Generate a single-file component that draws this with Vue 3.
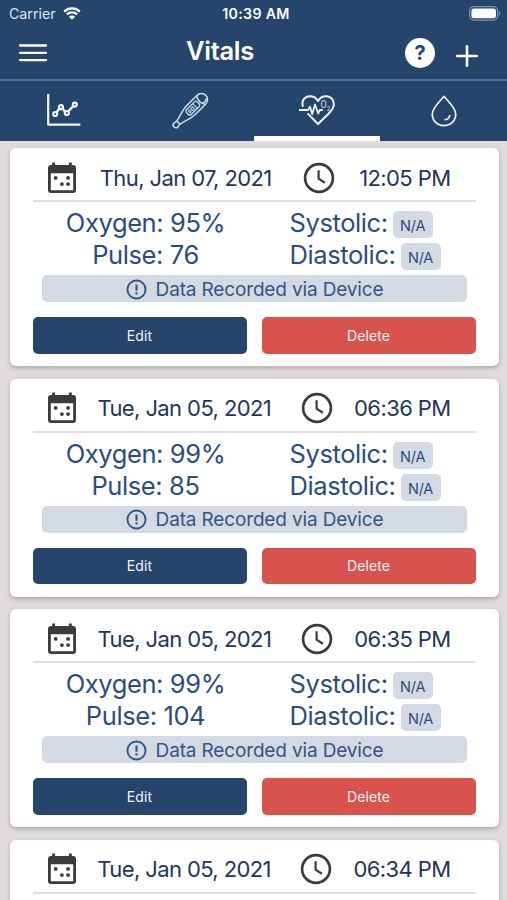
<template>
  <div class="screen">
    <header class="header">
      <div class="status">
        <div class="carrier">
          <span>Carrier</span>
          <svg class="wifi" viewBox="0 0 18 13">
            <path d="M1.2 4.6a11.2 11.2 0 0 1 15.6 0M3.9 7.4a7.4 7.4 0 0 1 10.2 0" />
            <path class="solid" d="M9 12.8L5.9 9.7a4.4 4.4 0 0 1 6.2 0z" />
          </svg>
        </div>
        <span class="time">10:39 AM</span>
        <svg class="battery" viewBox="0 0 32 15">
          <rect x=".7" y=".7" width="28" height="13.4" rx="4" />
          <rect class="level" x="2.4" y="2.5" width="24.6" height="9.8" rx="2.4" />
          <path class="level tip" d="M30 5.2c1.6.6 1.6 3.8 0 4.4z" />
        </svg>
      </div>
      <div class="toolbar">
        <button class="icon-btn" aria-label="Menu">
          <svg width="28" height="18" viewBox="0 0 28 18">
            <path d="M1 1.5h26M1 8.8h26M1 16.1h26" stroke="#fff" stroke-width="2.3" stroke-linecap="round" />
          </svg>
        </button>
        <h1 class="title">Vitals</h1>
        <div class="actions">
          <button class="help">?</button>
          <button class="icon-btn" aria-label="Add">
            <svg width="22" height="22" viewBox="0 0 22 22">
              <path d="M11 1.2v19.6M1.2 11h19.6" stroke="#fff" stroke-width="2.6" stroke-linecap="round" />
            </svg>
          </button>
        </div>
      </div>
      <nav class="tabs">
        <button v-for="tab in tabs" :key="tab" class="tab" :class="{ active: tab === activeTab }" :aria-label="tab"
          @click="activeTab = tab">
          <svg v-if="tab === 'chart'" width="34" height="34" viewBox="0 0 34 34">
            <path d="M2.2 1v30.6H34.4" stroke-width="2.2" />
            <path d="M10.6 19.2l3-4M16.4 15.4l2.8 3.4M22 18.6l5.4-5.6" stroke-width="2.4" />
            <circle cx="9.2" cy="21" r="2" stroke-width="2.2" />
            <circle cx="15" cy="14.2" r="2" stroke-width="2.2" />
            <circle cx="20.8" cy="20" r="2" stroke-width="2.2" />
            <circle cx="28.8" cy="11.6" r="2" stroke-width="2.2" />
          </svg>
          <svg v-else-if="tab === 'temperature'" class="thermo" width="38" height="38" viewBox="0 0 38 38">
            <g transform="translate(19 19) rotate(45)" stroke-width="1.5">
              <path d="M-6.2-15.5C-6.2-24.6 6.2-24.6 6.2-15.5V-2C6.2 5 3.4 10 2.2 16.500h-4.400C-3.400 10-6.200 5-6.200-2z" />
              <path d="M-6-15.500C-3-12.800 3-12.800 6-15.500M2.500-20.500c1.400 1.500 1.600 3.600 1 5.800" />
              <path d="M-2.200 16.500l-.6 3.500c0 3.400 5.600 3.400 5.600 0l-.6-3.500" />
              <rect x="-3.300" y="-11.600" width="6.600" height="15.200" rx="2" stroke-width="1.300" />
              <path d="M-3.200-7h6.400M-1.200-4.600h2.600v2.600h-2.600zM-1.200-.2h2.600v1.400h-2.600z" stroke-width="1" />
            </g>
          </svg>
          <svg v-else-if="tab === 'heart'" class="heart" width="38" height="34" viewBox="0 0 38 34">
            <path d="M5 12.800C3 6.600 6.800 2.200 12 2.200c3.600 0 6.200 1.700 8 4.800 1.800-3.100 4.400-4.800 8-4.800 5.200 0 8.300 4.200 7.800 8.800-.4 3.600-2.700 6.200-5.300 8.800L20 30 9.600 19.400" stroke-width="2" />
            <path d="M1 16h9l2-3.200 2.200 7.300 2.800-9.600 3.200 9 1.700-3.500h2.800" stroke-width="1.800" />
            <text class="o2" x="22.400" y="14">0<tspan class="sub" dy="2.600">2</tspan></text>
          </svg>
          <svg v-else class="drop" width="28" height="34" viewBox="0 0 28 34">
            <path d="M14 2.300C10 7.500 2.300 13.500 2.300 20.300c0 6.500 5 11.300 11.700 11.300s11.700-4.800 11.700-11.300C25.700 13.500 18 7.500 14 2.300z" stroke-width="1.700" />
            <path d="M14.500 25.700c3 0 4.900-1.800 5.300-4.700" stroke-width="1.800" />
          </svg>
        </button>
      </nav>
    </header>

    <main class="list">
      <article v-for="item in vitals" :key="item.time" class="card">
        <div class="when">
          <svg class="calendar" width="28" height="32" viewBox="0 0 28 32">
            <path d="M3 3h1.200V.6h2.900V3h13.800V.6h2.900V3H25a3 3 0 0 1 3 3v22a3 3 0 0 1-3 3H3a3 3 0 0 1-3-3V6a3 3 0 0 1 3-3zm-.2 8.200v17h22.400v-17z" fill-rule="evenodd" />
            <circle cx="7.700" cy="15.900" r="1.900" />
            <circle cx="20.100" cy="15.900" r="1.900" />
            <circle cx="13.900" cy="22.100" r="1.900" />
            <circle cx="20.100" cy="22.100" r="1.900" />
          </svg>
          <span class="date">{{ item.date }}</span>
          <svg class="clock" width="32" height="32" viewBox="0 0 32 32">
            <circle cx="16" cy="16" r="13.900" stroke-width="2.700" />
            <path d="M15.600 8.300v8.400l6.300 4" stroke-width="2.200" />
          </svg>
          <span class="hour">{{ item.time }}</span>
        </div>
        <template v-if="item.oxygen">
          <div class="values">
            <div class="col center">
              <div>Oxygen: {{ item.oxygen }}%</div>
              <div>Pulse: {{ item.pulse }}</div>
            </div>
            <div class="col">
              <div class="pressure">Systolic: <span class="badge">N/A</span></div>
              <div class="pressure">Diastolic: <span class="badge">N/A</span></div>
            </div>
          </div>
          <div class="source">
            <svg width="21" height="21" viewBox="0 0 22 22">
              <circle cx="11" cy="11" r="9.500" stroke-width="2" />
              <path d="M11 5.800v6.400M11 14v2.200" stroke-width="2.200" />
            </svg>
            <span>Data Recorded via Device</span>
          </div>
          <div class="buttons">
            <button class="btn edit">Edit</button>
            <button class="btn delete">Delete</button>
          </div>
        </template>
      </article>
    </main>
  </div>
</template>

<script setup>
import { ref } from 'vue';

const tabs = ['chart', 'temperature', 'heart', 'blood'];
const activeTab = ref('heart');

const vitals = ref([
  { date: 'Thu, Jan 07, 2021', time: '12:05 PM', oxygen: 95, pulse: 76 },
  { date: 'Tue, Jan 05, 2021', time: '06:36 PM', oxygen: 99, pulse: 85 },
  { date: 'Tue, Jan 05, 2021', time: '06:35 PM', oxygen: 99, pulse: 104 },
  { date: 'Tue, Jan 05, 2021', time: '06:34 PM' },
]);
</script>

<style>
body {
  margin: 0;
  overflow: hidden;
}
</style>

<style scoped>
.screen {
  height: 900px;
  overflow: hidden;
  display: flex;
  flex-direction: column;
  background: #dfdbdb;
  font-family: Inter, "Liberation Sans", sans-serif;
  box-sizing: border-box;
}

.screen * {
  box-sizing: border-box;
}

button {
  font-family: inherit;
  border: 0;
  padding: 0;
  background: none;
}

svg {
  display: block;
  overflow: visible;
  flex: none;
}

.header {
  flex: none;
  height: 141px;
  background: #25456d;
  color: #fff;
}

.status {
  height: 27px;
  display: grid;
  grid-template-columns: 1fr auto 1fr;
  align-items: center;
  padding: 0 6px 0 9px;
  font-size: 14.2px;
}

.carrier {
  display: flex;
  align-items: center;
  gap: 7px;
  color: #dce5f0;
}

.wifi {
  width: 18px;
  height: 13px;
  fill: none;
  stroke: #fff;
  stroke-width: 2.3;
}

.wifi .solid {
  fill: #fff;
  stroke: none;
}

.time {
  padding-left: 2px;
  font-weight: 600;
  letter-spacing: 0.3px;
}

.battery {
  justify-self: end;
  width: 32px;
  height: 15px;
  fill: none;
  stroke: #8194ae;
  stroke-width: 1.2;
}

.battery .level {
  fill: #fff;
  stroke: none;
}

.battery .tip {
  fill: #8194ae;
}

.toolbar {
  height: 54px;
  display: grid;
  grid-template-columns: 167px 1fr auto;
  align-items: center;
  padding: 0 29px 0 19px;
  border-bottom: 2px solid #52719a;
}

.title {
  margin: 0;
  padding-bottom: 4px;
  font-size: 25.5px;
  line-height: 30px;
  font-weight: 600;
  letter-spacing: -0.3px;
}

.actions {
  display: flex;
  align-items: center;
  gap: 21px;
}

.actions .icon-btn {
  padding-top: 6px;
}

.help {
  width: 30px;
  height: 30px;
  border-radius: 50%;
  background: #fff;
  color: #25456d;
  font-size: 20px;
  font-weight: 700;
  line-height: 30px;
  text-align: center;
}

.tabs {
  height: 60px;
  display: grid;
  grid-template-columns: repeat(4, 1fr);
}

.tab {
  display: flex;
  align-items: center;
  justify-content: center;
  border-bottom: 5px solid transparent;
  padding-top: 3px;
}

.tab.active {
  border-bottom-color: #fff;
}

.tab svg {
  fill: none;
  stroke: #f2f6fb;
  stroke-linejoin: round;
}

.tab .thermo {
  stroke: #cfdeee;
  margin-top: 2px;
}

.tab .heart,
.tab .drop {
  margin-top: 2px;
}

.tab .o2 {
  fill: #cfdbe9;
  stroke: none;
  font-size: 10px;
}

.tab .sub {
  font-size: 6px;
}

.list {
  display: flex;
  flex-direction: column;
  gap: 12.6px;
  padding: 7px 8.5px 0 9.5px;
}

.card {
  flex: none;
  height: 218px;
  padding: 0 23px;
  background: #fff;
  border-radius: 6px;
  box-shadow: 0 2px 4px rgba(60, 50, 50, 0.3);
}

.when {
  height: 54px;
  display: flex;
  align-items: center;
  justify-content: space-between;
  padding: 7px 25px 0 15.5px;
  border-bottom: 2px solid #dedfe1;
  color: #22355a;
  font-size: 22px;
}

.when svg {
  fill: #3b3b3c;
}

.when .clock {
  fill: none;
  stroke: #3b3b3c;
  margin-left: 8px;
}

.date,
.hour {
  letter-spacing: -0.6px;
  white-space: nowrap;
}

.values {
  display: grid;
  grid-template-columns: 226px 1fr;
  padding-top: 5px;
  color: #2a4d7c;
  font-size: 25.5px;
  line-height: 32px;
  letter-spacing: -0.4px;
}

.center {
  text-align: center;
}

.col:last-child {
  padding-left: 31px;
}

.pressure {
  height: 32px;
  display: flex;
  gap: 5px;
}

.badge {
  width: 40px;
  height: 27px;
  margin-top: 4px;
  border-radius: 5px;
  background: #d3dae3;
  font-size: 14.5px;
  line-height: 29px;
  letter-spacing: -0.2px;
  text-align: center;
}

.source {
  height: 27px;
  margin: 4px 9px 0;
  padding: 1px 0 0 1px;
  display: flex;
  align-items: center;
  justify-content: center;
  gap: 9px;
  border-radius: 5px;
  background: #d3dae3;
  color: #335582;
  font-size: 19px;
  letter-spacing: -0.15px;
  white-space: nowrap;
}

.source svg {
  fill: none;
  stroke: #335582;
}

.buttons {
  display: grid;
  grid-template-columns: 1fr 1fr;
  gap: 15px;
  margin-top: 15px;
}

.btn {
  height: 36.5px;
  border-radius: 5px;
  color: #f3f6fa;
  font-size: 14px;
  letter-spacing: 0.1px;
}

.edit {
  background: #25456d;
}

.delete {
  background: #d8524e;
}
</style>
